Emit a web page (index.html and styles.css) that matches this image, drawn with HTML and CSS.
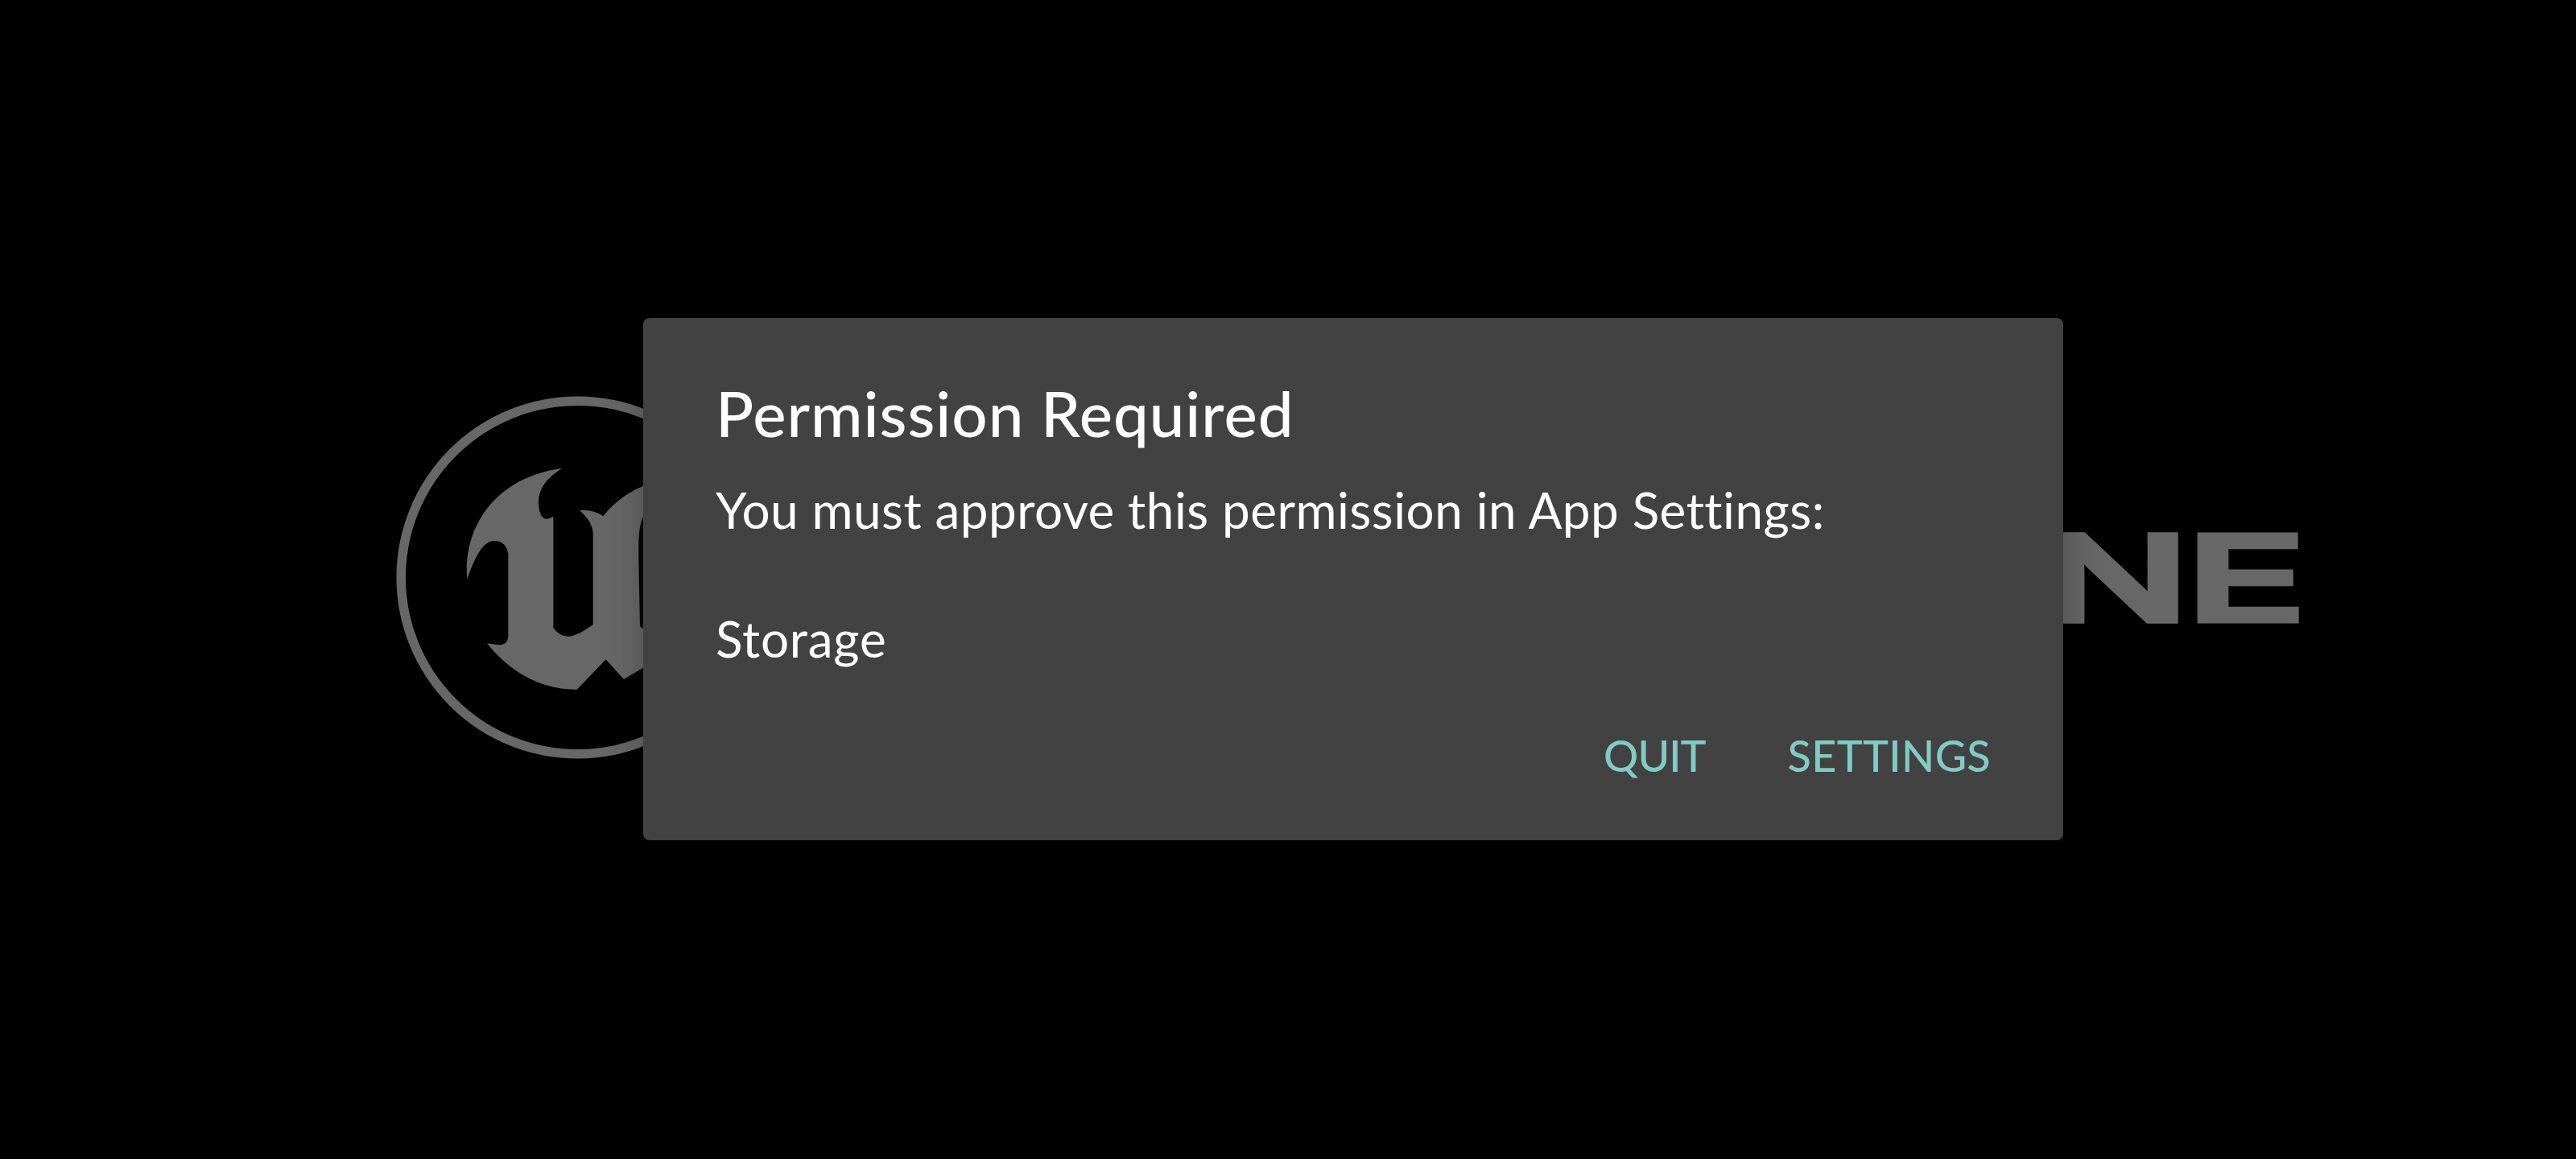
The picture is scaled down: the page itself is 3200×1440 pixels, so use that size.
FILE: index.html
```html
<!DOCTYPE html>
<html lang="en">

<head>
  <meta charset="UTF-8">
  <meta name="viewport" content="width=device-width, initial-scale=1.0">
  <title>Permission Required</title>
  <link rel="stylesheet" href="styles.css">
</head>

<body>
  <svg class="splash" viewBox="0 0 3200 1440" aria-hidden="true">
    <circle class="ring" cx="717.5" cy="717.5" r="219.3" />
    <path class="mark" transform="translate(470 470) scale(.33333)" d="M685 335C640 365 595 400 597 470C598 500 610 525 628 524Q640 522 652 515V930Q675 962 707 962Q740 962 800 918V575C798 545 780 520 750 492Q800 488 838 514Q895 440 990 400V510Q970 545 970 620V670L975 925L990 935V1077L915 1122L848 1048L740 1160C600 1163 480 1085 405 988Q430 993 455 994Q483 992 484 960V655C478 620 460 605 430 606C385 608 355 680 331 750C315 560 430 370 685 335Z" />
    <text class="wordmark" transform="translate(2538 769.5) scale(1.68 1)">N</text>
    <text class="wordmark" transform="translate(2716 769.5) scale(1.72 1)">E</text>
  </svg>

  <div class="dialog" role="dialog">
    <h1 class="title">Permission Required</h1>
    <div class="message">
      <p class="line">You must approve this permission in App Settings:</p>
      <p class="name">Storage</p>
    </div>
    <div class="buttons">
      <button class="btn quit">QUIT</button>
      <button class="btn settings">SETTINGS</button>
    </div>
  </div>
</body>

</html>
```

FILE: styles.css
```css
body {
  margin: 0;
  width: 3200px;
  height: 1440px;
  box-sizing: border-box;
  padding-left: 162px;
  padding-bottom: 1px;
  display: flex;
  align-items: center;
  justify-content: center;
  overflow: hidden;
  background: #000;
  font-family: Lato, sans-serif;
  font-variant-ligatures: none;
}

.splash {
  position: absolute;
  top: 0;
  left: 0;
  width: 3200px;
  height: 1440px;
}

.ring {
  fill: none;
  stroke: #676767;
  stroke-width: 11.5;
}

.mark {
  fill: #676767;
}

.wordmark {
  fill: #676767;
  stroke: #676767;
  stroke-width: 13;
  stroke-linejoin: miter;
  vector-effect: non-scaling-stroke;
  font: 400 143px Inter, sans-serif;
}

.dialog {
  position: relative;
  box-sizing: border-box;
  width: 1764px;
  height: 649px;
  padding: 70px 90px 0;
  border-radius: 8px;
  background: #424242;
  box-shadow: 0 0 50px rgba(0, 0, 0, .25);
  color: #fff;
}

.title {
  margin: 0;
  font-size: 78px;
  font-weight: 500;
  line-height: 96px;
  letter-spacing: 1px;
  white-space: nowrap;
}

.message {
  margin-top: 32px;
  font-size: 62px;
  line-height: 80px;
  letter-spacing: .5px;
}

.line,
.name {
  margin: 0 0 80px;
  white-space: nowrap;
}

.name {
  margin-bottom: 0;
  letter-spacing: .8px;
}

.buttons {
  display: flex;
  justify-content: flex-end;
  gap: 102px;
  margin-top: 66px;
}

.btn {
  padding: 0;
  border: 0;
  background: none;
  color: #80cbc4;
  font: 500 54px/80px Lato, sans-serif;
}

.quit {
  letter-spacing: -1px;
}

.settings {
  letter-spacing: .3px;
}
```
